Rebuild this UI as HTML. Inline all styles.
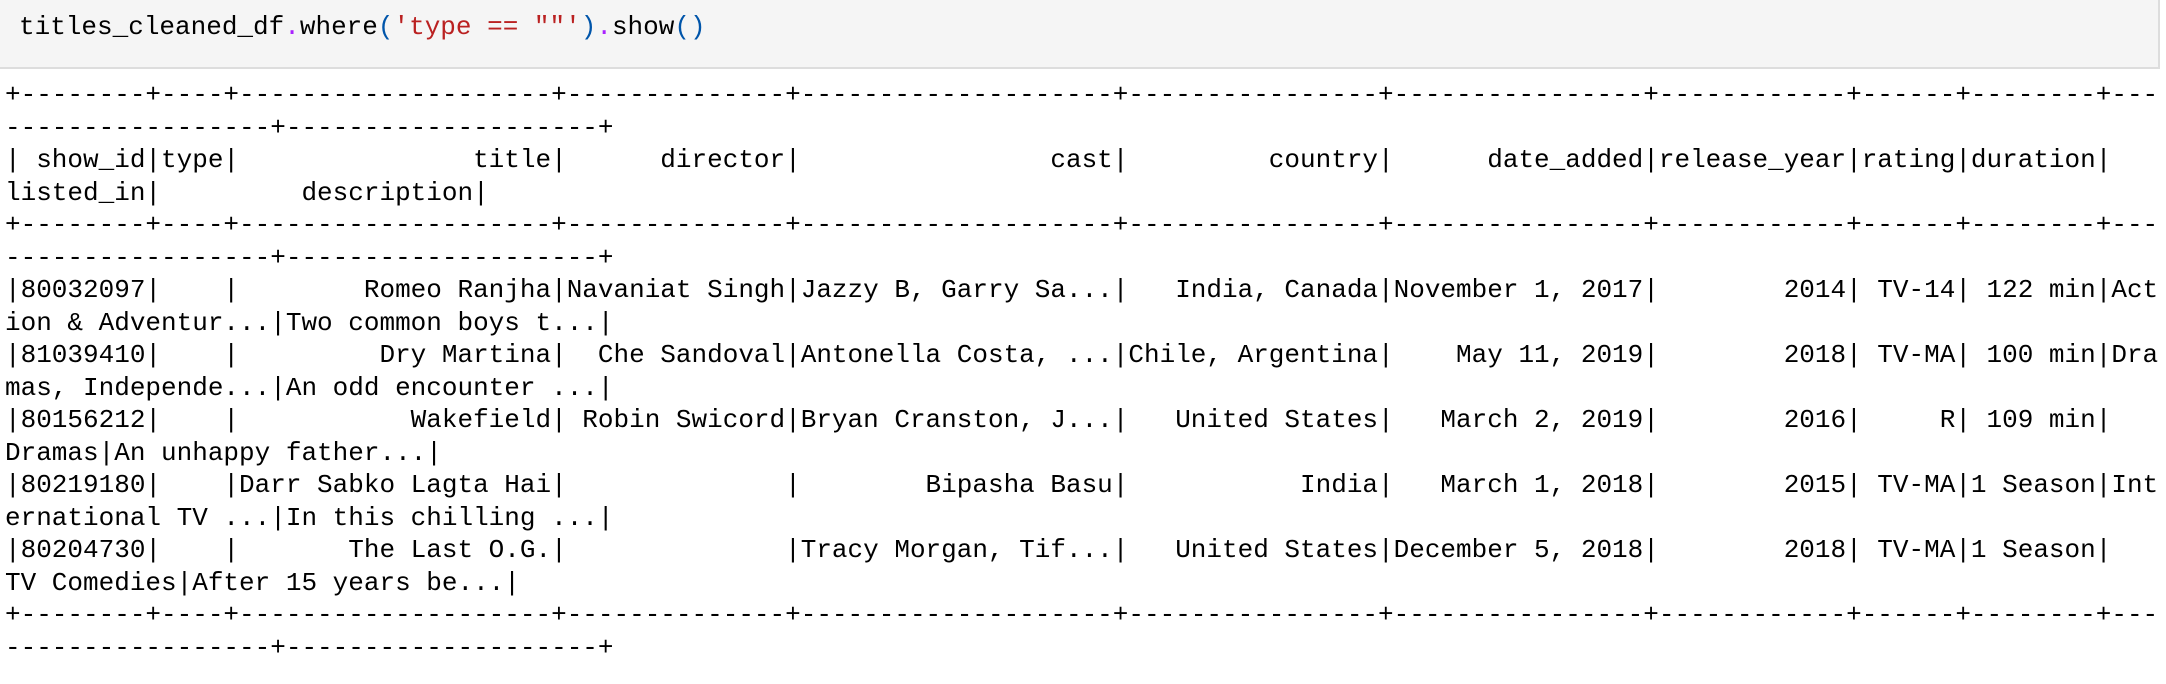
<!DOCTYPE html>
<html><head><meta charset="utf-8"><style>
html,body{margin:0;padding:0;background:#fff;width:2166px;height:684px;overflow:hidden}
.in{position:absolute;left:0;top:0;width:2158px;height:67px;background:#f5f5f5;border-right:2px solid #ddd;border-bottom:2px solid #ddd}
pre{margin:0;position:absolute;font-family:"Liberation Mono",monospace;font-size:26px;color:#000;white-space:pre}
.code{left:19px;top:11px;line-height:32px}
.out{left:5px;top:79px;line-height:32.5px}
.p{color:#aa22ff}.b{color:#0055aa}.r{color:#ba2121}
</style></head><body>
<div class="in"></div>
<pre class="code">titles_cleaned_df<span class="p">.</span>where<span class="b">(</span><span class="r">'type == ""'</span><span class="b">)</span><span class="p">.</span>show<span class="b">()</span></pre>
<pre class="out">+--------+----+--------------------+--------------+--------------------+----------------+----------------+------------+------+--------+---
-----------------+--------------------+
| show_id|type|               title|      director|                cast|         country|      date_added|release_year|rating|duration|
listed_in|         description|
+--------+----+--------------------+--------------+--------------------+----------------+----------------+------------+------+--------+---
-----------------+--------------------+
|80032097|    |        Romeo Ranjha|Navaniat Singh|Jazzy B, Garry Sa...|   India, Canada|November 1, 2017|        2014| TV-14| 122 min|Act
ion &amp; Adventur...|Two common boys t...|
|81039410|    |         Dry Martina|  Che Sandoval|Antonella Costa, ...|Chile, Argentina|    May 11, 2019|        2018| TV-MA| 100 min|Dra
mas, Independe...|An odd encounter ...|
|80156212|    |           Wakefield| Robin Swicord|Bryan Cranston, J...|   United States|   March 2, 2019|        2016|     R| 109 min|
Dramas|An unhappy father...|
|80219180|    |Darr Sabko Lagta Hai|              |        Bipasha Basu|           India|   March 1, 2018|        2015| TV-MA|1 Season|Int
ernational TV ...|In this chilling ...|
|80204730|    |       The Last O.G.|              |Tracy Morgan, Tif...|   United States|December 5, 2018|        2018| TV-MA|1 Season|
TV Comedies|After 15 years be...|
+--------+----+--------------------+--------------+--------------------+----------------+----------------+------------+------+--------+---
-----------------+--------------------+</pre>
</body></html>
